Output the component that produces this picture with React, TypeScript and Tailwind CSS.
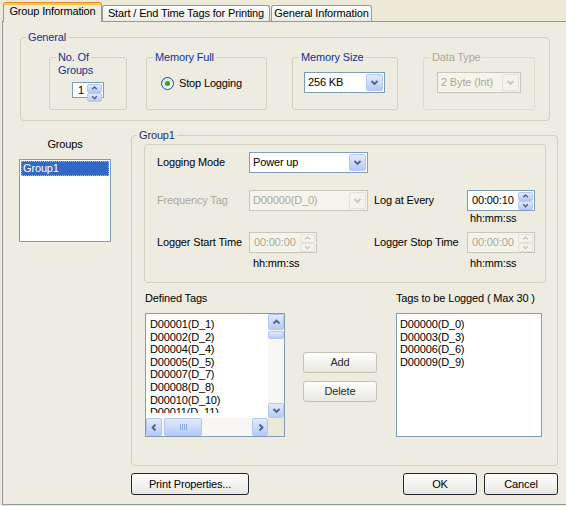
import type { ReactNode } from "react";

type Dir = "up" | "down" | "left" | "right";

const ARROWS: Record<Dir, string> = {
  up: "M1.5 5.5 L4.5 2.5 L7.5 5.5",
  down: "M1.5 3 L4.5 6 L7.5 3",
  left: "M5.5 1.5 L2.5 4.5 L5.5 7.5",
  right: "M3.5 1.5 L6.5 4.5 L3.5 7.5",
};

const Arrow = ({ dir, color = "#4D6185", size = 9 }: { dir: Dir; color?: string; size?: number }) => (
  <svg width={size} height={size} viewBox="0 0 9 9">
    <path d={ARROWS[dir]} fill="none" stroke={color} strokeWidth={1.8} />
  </svg>
);

const BlueBtn = ({ className = "", disabled, children }: { className?: string; disabled?: boolean; children?: ReactNode }) => (
  <div
    className={`flex items-center justify-center rounded-[2px] border ${
      disabled ? "border-[#E4E2D8] bg-[#F3F2EC]" : "border-[#B4C6F2] bg-linear-to-b from-[#E2EAFE] to-[#B6CAF7]"
    } ${className}`}
  >
    {children}
  </div>
);

const Combo = ({ value, className = "", disabled }: { value: string; className?: string; disabled?: boolean }) => (
  <div
    className={`flex h-[21px] items-center border p-px ${
      disabled ? "border-[#C9C7BA] bg-[#F5F4EA] text-[#ACA899]" : "border-[#7F9DB9] bg-white"
    } ${className}`}
  >
    <span className="flex-1 truncate pl-[2px]">{value}</span>
    <BlueBtn disabled={disabled} className="h-[17px] w-[17px]">
      <Arrow dir="down" color={disabled ? "#C9C7BA" : "#4D6185"} />
    </BlueBtn>
  </div>
);

const Spin = ({
  value,
  className = "",
  textClass = "pl-[3px]",
  disabled,
}: {
  value: string;
  className?: string;
  textClass?: string;
  disabled?: boolean;
}) => (
  <div
    className={`flex border p-px ${
      disabled ? "border-[#C9C7BA] bg-[#F5F4EA] text-[#ACA899]" : "border-[#7F9DB9] bg-white"
    } ${className}`}
  >
    <span className={`flex-1 self-center ${textClass}`}>{value}</span>
    <div className="flex w-[15px] flex-col">
      <BlueBtn disabled={disabled} className="flex-1">
        <Arrow dir="up" size={7} color={disabled ? "#C9C7BA" : "#4D6185"} />
      </BlueBtn>
      <BlueBtn disabled={disabled} className="flex-1">
        <Arrow dir="down" size={7} color={disabled ? "#C9C7BA" : "#4D6185"} />
      </BlueBtn>
    </div>
  </div>
);

const PushBtn = ({ children, className = "", soft }: { children: ReactNode; className?: string; soft?: boolean }) => (
  <div
    className={`flex items-center justify-center rounded-[3px] border bg-linear-to-b from-white to-[#E8E7E1] ${
      soft ? "border-[#C4C2B6] text-[#2b2b2b]" : "border-[#1F2733]"
    } ${className}`}
  >
    {children}
  </div>
);

const Grip = () => (
  <div className="flex gap-px">
    <span className="h-[6px] w-px bg-[#8FA9E8]" />
    <span className="h-[6px] w-px bg-[#8FA9E8]" />
    <span className="h-[6px] w-px bg-[#8FA9E8]" />
    <span className="h-[6px] w-px bg-[#8FA9E8]" />
  </div>
);

const defined = ["D00001(D_1)", "D00002(D_2)", "D00004(D_4)", "D00005(D_5)", "D00007(D_7)", "D00008(D_8)", "D00010(D_10)", "D00011(D_11)"];
const logged = ["D00000(D_0)", "D00003(D_3)", "D00006(D_6)", "D00009(D_9)"];

export default function App() {
  return (
    <div className="h-[506px] w-[566px] overflow-hidden bg-[#ECE9D8] pt-[2px] font-['Liberation_Sans',Arial,sans-serif] text-[11px] leading-[13px] tracking-[-0.15px] text-black">
      {/* tabs */}
      <div className="relative z-10 mb-[-1px] flex h-[20px] items-end pl-[3px]">
        <div className="flex h-[20px] w-[99px] justify-center rounded-t-[3px] border-x border-t border-[#919B9C] border-t-[#E68B2C] bg-[#EEECE1] pt-[2px] shadow-[inset_0_2px_0_#FFC83C]">
          Group Information
        </div>
        <div className="mb-px flex h-[16px] w-[168px] justify-center rounded-t-[3px] border-x border-t border-[#919B9C] bg-linear-to-b from-white to-[#ECEBE6] pt-px">
          Start / End Time Tags for Printing
        </div>
        <div className="mb-px ml-px flex h-[16px] w-[101px] justify-center rounded-t-[3px] border-x border-t border-[#919B9C] bg-linear-to-b from-white to-[#ECEBE6] pt-px">
          General Information
        </div>
      </div>

      {/* tab body */}
      <div className="ml-[2px] h-[484px] border-y border-l border-[#919B9C] bg-[#EEECE1]">
        <fieldset className="ml-[17px] mt-[9px] h-[90px] w-[530px] rounded-[4px] border border-[#D0D0BF]">
          <legend className="ml-[5px] px-[2px] text-[#0F3296]">General</legend>
          <div className="mt-[7px] flex">
            <fieldset className="ml-[28px] h-[59px] w-[78px] rounded-[3px] border border-[#D0D0BF]">
              <legend className="ml-[6px] px-[2px] text-[#0F3296]">No. Of</legend>
              <div className="pl-[8px] text-[#0F3296]">Groups</div>
              <Spin value="1" textClass="pl-[4px]" className="ml-[22px] mt-[5px] h-[16px] w-[32px]" />
            </fieldset>
            <fieldset className="ml-[19px] h-[59px] w-[121px] rounded-[3px] border border-[#D0D0BF]">
              <legend className="ml-[6px] px-[2px] text-[#0F3296]">Memory Full</legend>
              <div className="mt-[13px] flex h-[13px] items-center pl-[14px]">
                <span className="flex h-[13px] w-[13px] items-center justify-center rounded-full border border-[#1C5180] bg-linear-to-br from-[#DCDBD5] to-white">
                  <span className="h-[5px] w-[5px] rounded-full bg-[#2BA82B]" />
                </span>
                <span className="ml-[5px]">Stop Logging</span>
              </div>
            </fieldset>
            <fieldset className="ml-[25px] h-[59px] w-[106px] rounded-[3px] border border-[#D0D0BF]">
              <legend className="ml-[6px] px-[2px] text-[#0F3296]">Memory Size</legend>
              <Combo value="256 KB" className="ml-[11px] mt-[8px] w-[81px]" />
            </fieldset>
            <fieldset className="ml-[25px] h-[59px] w-[112px] rounded-[3px] border border-[#DCDBCD]">
              <legend className="ml-[6px] px-[2px] text-[#ACA899]">Data Type</legend>
              <Combo value="2 Byte (Int)" disabled className="ml-[13px] mt-[8px] w-[84px]" />
            </fieldset>
          </div>
        </fieldset>

        <div className="mt-[8px] flex items-start">
          {/* groups list */}
          <div className="ml-[16px] w-[92px]">
            <div className="mt-[9px] text-center">Groups</div>
            <div className="mt-[8px] h-[83px] border border-[#7F9DB9] bg-white p-px">
              <div className="border border-dotted border-[#9DB8F0] bg-[#316AC5] pl-px text-white">Group1</div>
            </div>
          </div>

          {/* Group1 */}
          <fieldset className="ml-[20px] h-[337px] w-[427px] rounded-[4px] border border-[#D0D0BF]">
            <legend className="ml-[5px] px-[2px] text-[#1F2E5C]">Group1</legend>
            <div className="ml-[12px] mt-[2px] h-[139px] w-[402px] rounded-[4px] border border-[#D0D0BF] pl-[12px]">
              <div className="mt-[7px] flex h-[21px] items-center">
                <span className="w-[92px]">Logging Mode</span>
                <Combo value="Power up" className="w-[119px]" />
              </div>

              <div className="mt-[17px] flex items-start">
                <span className="flex h-[21px] w-[92px] items-center text-[#ACA899]">Frequency Tag</span>
                <Combo value="D00000(D_0)" disabled className="w-[119px]" />
                <span className="ml-[6px] flex h-[21px] w-[93px] items-center">Log at Every</span>
                <div>
                  <Spin value="00:00:10" className="h-[21px] w-[68px]" />
                  <div className="ml-[3px] mt-px">hh:mm:ss</div>
                </div>
              </div>

              <div className="mt-[7px] flex items-start">
                <span className="flex h-[21px] w-[92px] items-center">Logger Start Time</span>
                <div className="w-[119px]">
                  <Spin value="00:00:00" disabled className="h-[21px] w-[68px]" />
                  <div className="ml-[4px] mt-[4px]">hh:mm:ss</div>
                </div>
                <span className="ml-[6px] flex h-[21px] w-[93px] items-center">Logger Stop Time</span>
                <div>
                  <Spin value="00:00:00" disabled className="h-[21px] w-[68px]" />
                  <div className="ml-[3px] mt-[4px]">hh:mm:ss</div>
                </div>
              </div>
            </div>

            <div className="mt-[9px] flex items-start">
              <div className="ml-[13px] w-[140px]">
                <div>Defined Tags</div>
                <div className="mt-[8px] flex h-[124px] flex-col border border-[#7F9DB9] bg-white">
                  <div className="flex h-[104px]">
                    <div className="flex-1">
                      <div className="h-[99px] overflow-hidden pl-[4px] pt-[4px] leading-[12.6px]">
                        {defined.map((t) => (
                          <div key={t}>{t}</div>
                        ))}
                      </div>
                    </div>
                    <div className="flex w-[16px] flex-col bg-[#F8F7F3]">
                      <BlueBtn className="h-[16px]">
                        <Arrow dir="up" />
                      </BlueBtn>
                      <BlueBtn className="mt-px h-[8px]" />
                      <div className="flex-1" />
                      <BlueBtn className="h-[15px]">
                        <Arrow dir="down" />
                      </BlueBtn>
                    </div>
                  </div>
                  <div className="flex flex-1 bg-[#F8F7F3]">
                    <BlueBtn className="w-[16px]">
                      <Arrow dir="left" />
                    </BlueBtn>
                    <BlueBtn className="ml-[2px] w-[38px]">
                      <Grip />
                    </BlueBtn>
                    <div className="flex-1" />
                    <BlueBtn className="w-[16px]">
                      <Arrow dir="right" />
                    </BlueBtn>
                    <div className="w-[16px] bg-[#ECE9D8]" />
                  </div>
                </div>
              </div>

              <div className="ml-[18px] mt-[60px] w-[74px]">
                <PushBtn soft className="h-[21px]">
                  Add
                </PushBtn>
                <PushBtn soft className="mt-[8px] h-[21px]">
                  Delete
                </PushBtn>
              </div>

              <div className="ml-[19px] w-[146px]">
                <div>Tags to be Logged ( Max 30 )</div>
                <div className="mt-[8px] h-[124px] border border-[#7F9DB9] bg-white pl-[3px] pt-[4px] leading-[12.6px]">
                  {logged.map((t) => (
                    <div key={t}>{t}</div>
                  ))}
                </div>
              </div>
            </div>
          </fieldset>
        </div>

        <div className="mt-[7px] flex">
          <PushBtn className="ml-[128px] h-[22px] w-[118px]">Print Properties...</PushBtn>
          <PushBtn className="ml-[154px] h-[22px] w-[74px]">OK</PushBtn>
          <PushBtn className="ml-[7px] h-[22px] w-[74px]">Cancel</PushBtn>
        </div>
      </div>
    </div>
  );
}
